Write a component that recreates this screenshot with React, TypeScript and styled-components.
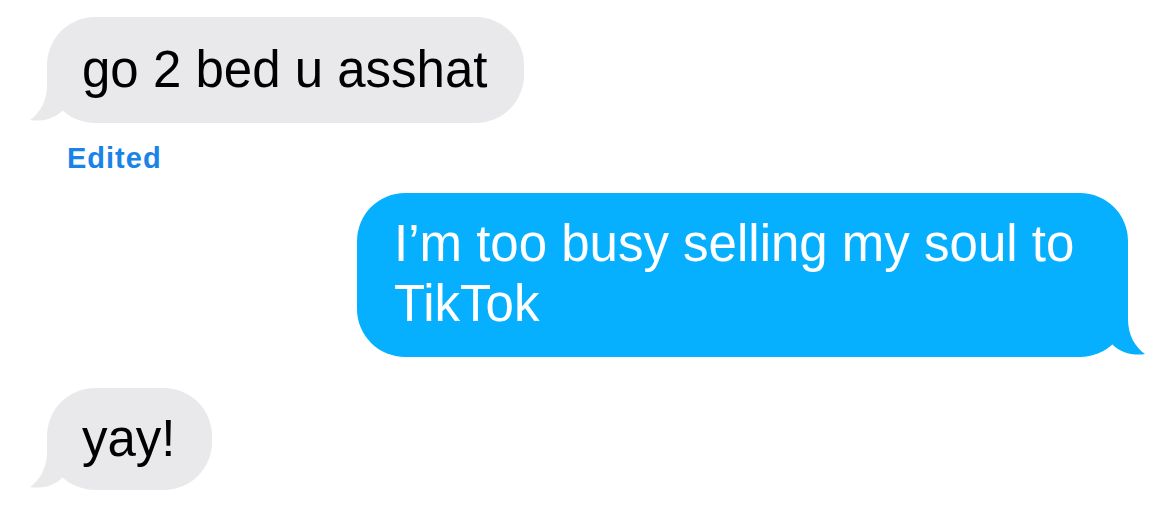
import React from "react"
import styled, { createGlobalStyle } from "styled-components"

const GlobalStyle = createGlobalStyle`
  body {
    margin: 0;
    background: #ffffff;
    font-family: "Liberation Sans", Arial, sans-serif;
  }
`

const Thread = styled.div`
  display: flex;
  flex-direction: column;
  align-items: flex-start;
  padding-top: 17px;
  width: 1164px;
`

const Bubble = styled.div<{ $mine?: boolean; $gap: number; $padTop: number; $padBottom: number }>`
  position: relative;
  box-sizing: border-box;
  max-width: 771px;
  margin-top: ${p => p.$gap}px;
  padding: ${p => p.$padTop}px 36px ${p => p.$padBottom}px ${p => (p.$mine ? 37 : 35)}px;
  align-self: ${p => (p.$mine ? "flex-end" : "flex-start")};
  margin-left: ${p => (p.$mine ? 0 : 47)}px;
  margin-right: ${p => (p.$mine ? 36 : 0)}px;
  border-radius: 48px;
  background: ${p => (p.$mine ? "#07b0fe" : "#e9e9eb")};
  color: ${p => (p.$mine ? "#ffffff" : "#000000")};
  font-size: 51px;
  line-height: 60px;
`

const Text = styled.span`
  position: relative;
  z-index: 1;
`

const TailSvg = styled.svg<{ $mine?: boolean }>`
  position: absolute;
  bottom: 0;
  width: 60px;
  height: 50px;
  ${p => (p.$mine ? "right: -20px; transform: scaleX(-1);" : "left: -20px;")}
`

const EditedLabel = styled.div`
  margin: 18px 0 0 67px;
  font-size: 29px;
  line-height: 34px;
  font-weight: 700;
  letter-spacing: 1px;
  color: #1a83e8;
`

const Tail = ({ mine, color }: { mine?: boolean; color: string }) => (
  <TailSvg $mine={mine} viewBox="0 0 60 50">
    <path
      d="M20 0 L20 12 C20 28 13 40 3 47 C14 49 28 46 36 37 L40 20 Z"
      fill={color}
    />
  </TailSvg>
)

const App = () => {
  return (
    <>
      <GlobalStyle />
      <Thread>
        <Bubble $gap={0} $padTop={23} $padBottom={23}>
          <Tail color="#e9e9eb" />
          <Text>go 2 bed u asshat</Text>
        </Bubble>
        <EditedLabel>Edited</EditedLabel>
        <Bubble $mine $gap={18} $padTop={21} $padBottom={23}>
          <Tail mine color="#07b0fe" />
          <Text>I’m too busy selling my soul to TikTok</Text>
        </Bubble>
        <Bubble $gap={31} $padTop={21} $padBottom={21}>
          <Tail color="#e9e9eb" />
          <Text>yay!</Text>
        </Bubble>
      </Thread>
    </>
  )
}

export default App
